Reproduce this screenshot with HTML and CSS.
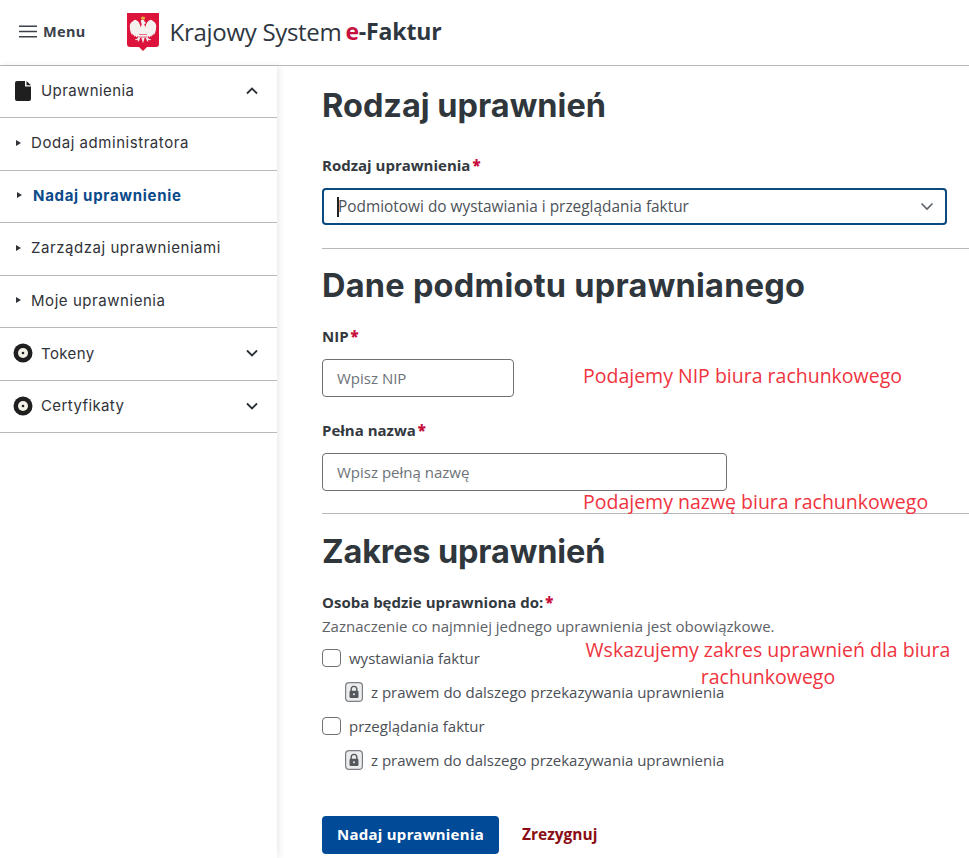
FILE: index.html
```html
<!DOCTYPE html>
<html lang="pl">
<head>
<meta charset="utf-8">
<title>Krajowy System e-Faktur</title>
<link rel="stylesheet" href="styles.css">
</head>
<body>
<header class="topbar">
  <button class="menu-btn" type="button">
    <svg class="menu-icon" viewBox="0 0 18 13" width="18" height="13"><path d="M0 1.2h18M0 6.5h18M0 11.8h18" stroke="#3a4149" stroke-width="1.5" fill="none"/></svg>
    <span>Menu</span>
  </button>
  <div class="brand">
    <svg class="crest" viewBox="0 0 32 38" width="32" height="38">
      <path d="M0 0h32v31q0 3-3 3h-9l-4 4-4-4H3q-3 0-3-3z" fill="#dc143c"/>
      <g fill="#f4f1ef">
        <path id="wing" d="M15 11.500 13.800 14.500C13 10.500 11 7.500 8.500 6.800 6.800 7.200 6.300 8 5.500 8.500 3.800 9.500 2.800 11 2.800 13c0 3 .5 6 1.800 8.500l.9-1 .3 2.200 1.200-1 .4 2 1.300-1 .5 1.800 1.300-1.200 1 .4-1.600 2.300-2 .3 1 1 2.200-.5-.6 2 1.600-.8.900-2.700 1.500-1.700z"/>
        <path d="M17 11.500 18.200 14.500C19 10.500 21 7.500 23.500 6.800 25.200 7.200 25.700 8 26.500 8.500 28.200 9.500 29.200 11 29.200 13c0 3-.5 6-1.800 8.500l-.9-1-.3 2.200-1.200-1-.4 2-1.300-1-.5 1.800-1.300-1.200-1 .4 1.600 2.300 2 .3-1 1-2.200-.5.6 2-1.600-.8-.9-2.700-1.500-1.700z"/>
        <path d="M16 6.500c-1.400 0-2.200 1-2.200 2.200 0 1 .8 1.600 1 2.500l-1.300 4 .5 8.500 2 6.500 2-6.500.5-8.500-1.300-4c.3-.6.8-.8 1.800-.8 0-1.200-1.300-1.400-1.500-1.900-.2-.8-.8-2-1.500-2z"/>
      </g>
      <path d="M13.800 3.500l1.100 1 1.100-1.500 1.100 1.500 1.100-1 -.5 3h-3.400z" fill="#e5b53a"/>
      <path d="M12 21.500h8M11.500 24h9" stroke="#dc143c" stroke-width=".6"/>
    </svg>
    <span class="brand-name">Krajowy System</span><span class="brand-e">e</span><span class="brand-faktur">-Faktur</span>
  </div>
</header>
<div class="layout">
  <nav class="sidebar">
    <div class="nav-row nav-head">
      <svg class="nav-icon" viewBox="0 0 16 20" width="16" height="20"><path d="M2 0h8v5.500h6V18a2 2 0 0 1-2 2H2a2 2 0 0 1-2-2V2a2 2 0 0 1 2-2zM11.500 0 16 4.200h-4.500z" fill="#1f1f1f"/></svg>
      <span class="nav-label">Uprawnienia</span>
      <svg class="chev" viewBox="0 0 12 8" width="12" height="8"><path d="M1 6.500l5-5 5 5" fill="none" stroke="#2c2f33" stroke-width="1.800"/></svg>
    </div>
    <a class="nav-row nav-sub"><i class="tri"></i><span>Dodaj administratora</span></a>
    <a class="nav-row nav-sub nav-active"><i class="tri"></i><span>Nadaj uprawnienie</span></a>
    <a class="nav-row nav-sub"><i class="tri"></i><span>Zarządzaj uprawnieniami</span></a>
    <a class="nav-row nav-sub"><i class="tri"></i><span>Moje uprawnienia</span></a>
    <div class="nav-row nav-head">
      <svg class="nav-icon disc" viewBox="0 0 20 20" width="20" height="20"><circle cx="10" cy="10" r="9.500" fill="#1f1f1f"/><circle cx="10" cy="10" r="5" fill="#f4f1e8"/><circle cx="10" cy="10" r="1.300" fill="#1f1f1f"/></svg>
      <span class="nav-label">Tokeny</span>
      <svg class="chev" viewBox="0 0 12 8" width="12" height="8"><path d="M1 1.500l5 5 5-5" fill="none" stroke="#2c2f33" stroke-width="1.800"/></svg>
    </div>
    <div class="nav-row nav-head">
      <svg class="nav-icon disc" viewBox="0 0 20 20" width="20" height="20"><circle cx="10" cy="10" r="9.500" fill="#1f1f1f"/><circle cx="10" cy="10" r="5" fill="#f4f1e8"/><circle cx="10" cy="10" r="1.300" fill="#1f1f1f"/></svg>
      <span class="nav-label">Certyfikaty</span>
      <svg class="chev" viewBox="0 0 12 8" width="12" height="8"><path d="M1 1.500l5 5 5-5" fill="none" stroke="#2c2f33" stroke-width="1.800"/></svg>
    </div>
  </nav>
  <main class="content">
    <section class="block block-first">
      <h1>Rodzaj uprawnień</h1>
      <div class="label label-type">Rodzaj uprawnienia<b class="req">*</b></div>
      <div class="select">
        <i class="caret"></i><span>Podmiotowi do wystawiania i przeglądania faktur</span>
        <svg class="select-chev" viewBox="0 0 14 9" width="14" height="9"><path d="M1.500 1.500 7 7l5.500-5.500" fill="none" stroke="#5b6168" stroke-width="1.600"/></svg>
      </div>
    </section>
    <section class="block block-data">
      <h1 class="wide">Dane podmiotu uprawnianego</h1>
      <div class="label label-nip">NIP<b class="req">*</b></div>
      <div class="input input-nip">Wpisz NIP</div>
      <div class="label label-name">Pełna nazwa<b class="req">*</b></div>
      <div class="input input-name">Wpisz pełną nazwę</div>
    </section>
    <section class="block block-scope">
      <h1 class="tight">Zakres uprawnień</h1>
      <div class="label label-scope">Osoba będzie uprawniona do:<b class="req">*</b></div>
      <p class="hint">Zaznaczenie co najmniej jednego uprawnienia jest obowiązkowe.</p>
      <div class="check"><i class="box"></i><span>wystawiania faktur</span></div>
      <div class="subcheck">
        <svg viewBox="0 0 18 20" width="18" height="20"><rect x=".6" y=".6" width="16.800" height="18.800" rx="3.500" fill="#eceded" stroke="#7b7f84" stroke-width="1.200"/><path d="M6.200 9V7.200a2.800 2.800 0 0 1 5.600 0V9" fill="none" stroke="#55595e" stroke-width="1.400"/><rect x="4.500" y="8.700" width="9" height="7.300" rx="1.200" fill="#55595e"/><circle cx="9" cy="12.300" r="1" fill="#eceded"/></svg>
        <span>z prawem do dalszego przekazywania uprawnienia</span>
      </div>
      <div class="check"><i class="box"></i><span>przeglądania faktur</span></div>
      <div class="subcheck">
        <svg viewBox="0 0 18 20" width="18" height="20"><rect x=".6" y=".6" width="16.800" height="18.800" rx="3.500" fill="#eceded" stroke="#7b7f84" stroke-width="1.200"/><path d="M6.200 9V7.200a2.800 2.800 0 0 1 5.600 0V9" fill="none" stroke="#55595e" stroke-width="1.400"/><rect x="4.500" y="8.700" width="9" height="7.300" rx="1.200" fill="#55595e"/><circle cx="9" cy="12.300" r="1" fill="#eceded"/></svg>
        <span>z prawem do dalszego przekazywania uprawnienia</span>
      </div>
      <div class="actions">
        <button class="primary" type="button">Nadaj uprawnienia</button>
        <a class="cancel">Zrezygnuj</a>
      </div>
    </section>
    <div class="note note-nip">Podajemy NIP biura rachunkowego</div>
    <div class="note note-name">Podajemy nazwę biura rachunkowego</div>
    <div class="note note-scope">Wskazujemy zakres uprawnień dla biura rachunkowego</div>
  </main>
</div>
</body>
</html>
```
FILE: styles.css
```css
* { box-sizing: border-box; }
html, body { margin: 0; padding: 0; }
body {
  width: 969px;
  height: 858px;
  overflow: hidden;
  background: #fff;
  color: #33393f;
  font-family: "Open Sans", "Liberation Sans", sans-serif;
}
.topbar {
  height: 66px;
  display: flex;
  align-items: center;
  border-bottom: 1px solid #b9b9b9;
  padding: 0 0 3px 19px;
}
.menu-btn {
  display: flex;
  align-items: center;
  gap: 6px;
  padding: 0;
  border: 0;
  background: none;
  font: 700 14.500px "Noto Sans", sans-serif;
  letter-spacing: .35px;
  color: #3a4149;
}
.brand {
  display: flex;
  align-items: center;
  margin-left: 41px;
  font-size: 24px;
  color: #2e3640;
}
.crest { margin-right: 11px; margin-top: 2px; }
.brand-name { letter-spacing: -.3px; }
.brand-e { font-weight: 700; color: #c8103e; margin-left: 4px; font-size: 23px; letter-spacing: -.2px; }
.brand-faktur { font-weight: 700; font-size: 23px; letter-spacing: -.15px; }
.layout { display: flex; height: 792px; }
.sidebar {
  width: 277px;
  flex: none;
  box-shadow: 2px 0 7px rgba(0,0,0,.09);
  font-family: Inter, "Noto Sans", sans-serif;
  font-size: 15px;
  color: #303338;
}
.nav-row {
  height: 52.500px;
  display: flex;
  align-items: center;
  border-bottom: 1px solid #b9b9b9;
  padding-bottom: 2px;
}
.nav-head { padding: 0 19px 1px 13px; }
.nav-head:first-child { height: 52px; padding-bottom: 2px; }
.nav-icon { flex: none; width: 20px; }
.nav-label { margin-left: 8px; flex: 1; letter-spacing: .4px; }
.chev { flex: none; }
.nav-sub { padding-left: 16px; gap: 10px; letter-spacing: .55px; }
.tri {
  width: 0;
  height: 0;
  flex: none;
  border-left: 5px solid #303338;
  border-top: 3.500px solid transparent;
  border-bottom: 3.500px solid transparent;
}
.nav-active { color: #0b4a8a; font-weight: 700; padding-left: 17px; gap: 11px; letter-spacing: .7px; }
.content {
  position: relative;
  flex: 1;
  min-width: 0;
  padding-left: 45px;
}
.block { border-bottom: 1px solid #b9b9b9; }
.block-first { height: 183px; padding-top: 20px; }
.block-data { height: 265px; padding-top: 17px; }
.block-scope { border-bottom: 0; padding-top: 18px; }
h1 {
  margin: 0;
  font: 700 32.500px/40px Inter, "Noto Sans", sans-serif;
  color: #2f363c;
}
h1.wide { letter-spacing: .25px; }
h1.tight { letter-spacing: -.15px; }
.label { font-size: 15px; font-weight: 700; line-height: 20px; color: #33393f; }
.req { color: #c8103e; margin-left: 2px; }
.label-type { margin-top: 29px; }
.select {
  width: 625px;
  height: 37px;
  margin-top: 13px;
  display: flex;
  align-items: center;
  border: 2px solid #0b4a7e;
  border-radius: 4px;
  padding: 0 11px 0 13px;
  font-size: 15.400px;
  color: #4d5359;
}
.caret { width: 2px; height: 20px; background: #222; margin-right: -1px; flex: none; }
.select span { flex: 1; }
.select-chev { flex: none; }
.label-nip { margin-top: 20px; }
.input {
  height: 38px;
  display: flex;
  align-items: center;
  border: 1px solid #6e7276;
  border-radius: 4px;
  padding-left: 14px;
  font-size: 15px;
  color: #6d7277;
}
.input-nip { width: 192px; margin-top: 13px; }
.label-name { margin-top: 23px; }
.input-name { width: 405px; margin-top: 13px; }
.label-scope { margin-top: 20px; }
.hint { margin: 4px 0 0; font-size: 15px; line-height: 20px; color: #5d6267; }
.check {
  height: 24px;
  margin-top: 10px;
  display: flex;
  align-items: center;
  gap: 8px;
  font-size: 15px;
  color: #4b5056;
}
.box {
  width: 19px;
  height: 18px;
  flex: none;
  border: 1px solid #6e7276;
  border-radius: 4px;
}
.subcheck {
  height: 24px;
  margin-top: 10px;
  padding-left: 23px;
  display: flex;
  align-items: center;
  gap: 8px;
  font-size: 15px;
  color: #4b5056;
}
.actions { display: flex; align-items: center; margin-top: 44px; }
.primary {
  width: 177px;
  height: 38px;
  border: 0;
  border-radius: 4px;
  padding: 0 0 2px;
  background: #004a98;
  color: #fff;
  font: 700 15px "Noto Sans", sans-serif;
  letter-spacing: .3px;
}
.cancel {
  margin: 0 0 2px 23px;
  font-size: 15.500px;
  font-weight: 700;
  color: #8b0d14;
}
.note {
  position: absolute;
  font-size: 19.500px;
  line-height: 27px;
  color: #ef3340;
  white-space: nowrap;
}
.note-nip { left: 306px; top: 296px; }
.note-name { left: 306px; top: 422px; }
.note-scope { left: 308px; top: 570px; width: 366px; white-space: normal; text-align: center; }
```
